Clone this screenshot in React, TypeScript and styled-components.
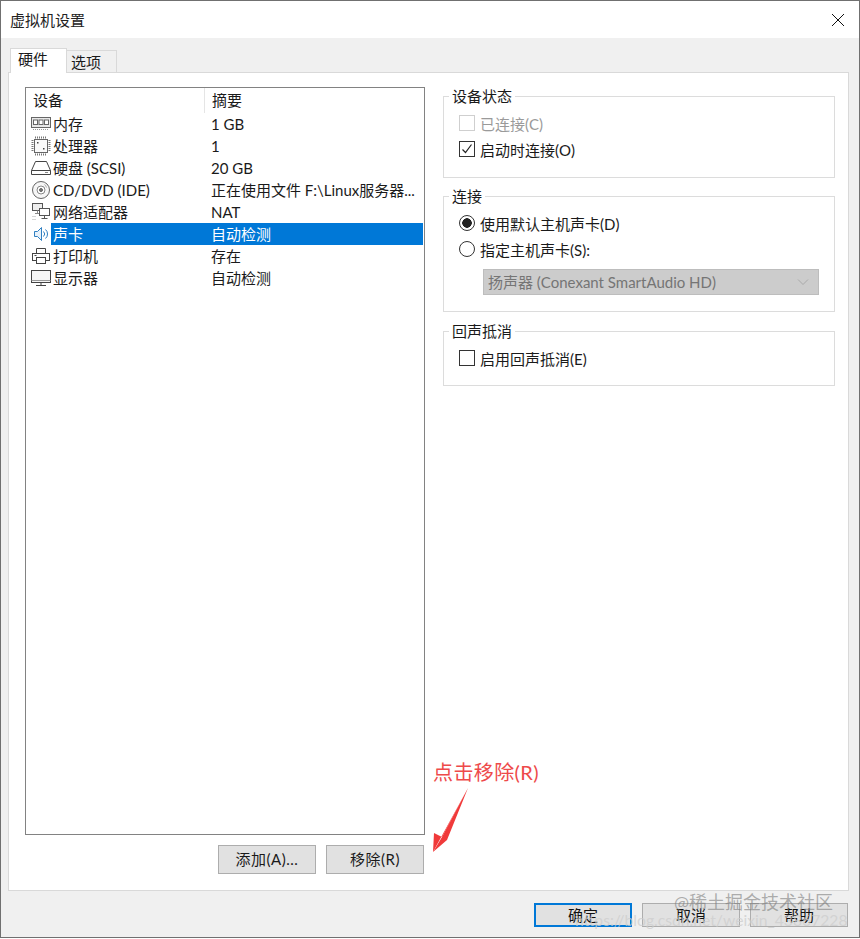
import React from 'react';
import styled, { createGlobalStyle } from 'styled-components';

const Global = createGlobalStyle`
  html, body {
    margin: 0;
    padding: 0;
    background: #fff;
  }
  body {
    font-family: Lato, "Noto Sans CJK SC", sans-serif;
    font-size: 15px;
    color: #1a1a1a;
  }
`;

const MemoryIcon = () => (
  <svg width="20" height="16" viewBox="0 0 20 16" fill="none" stroke="#666">
    <rect x="0.5" y="1.5" width="19" height="10" fill="#e8e8e8" />
    <rect x="2.5" y="4" width="4" height="4.5" fill="#fff" />
    <rect x="8" y="4" width="4" height="4.5" fill="#fff" />
    <rect x="13.5" y="4" width="4" height="4.5" fill="#fff" />
    <path d="M2 13.5h16" stroke="#999" strokeDasharray="1 1" />
  </svg>
);

const CpuIcon = () => (
  <svg width="20" height="20" viewBox="0 0 20 20" fill="none" stroke="#666">
    <rect x="3.5" y="3.5" width="13" height="13" fill="#fafafa" />
    <path d="M4 1.5h12M4 18.5h12M1.5 4v12M18.5 4v12" stroke="#777" strokeWidth="2" strokeDasharray="1 1" />
    <rect x="6" y="6" width="1.5" height="1.5" fill="#444" stroke="none" />
    <rect x="12" y="12" width="1.5" height="1.5" fill="#444" stroke="none" />
  </svg>
);

const DiskIcon = () => (
  <svg width="20" height="18" viewBox="0 0 20 18" fill="none" stroke="#444">
    <path d="M4.5 2.5h11l4 9v4h-19v-4z" />
    <path d="M0.5 11.5h19" />
    <path d="M14 13.5h3" stroke="#888" />
  </svg>
);

const CdIcon = () => (
  <svg width="20" height="20" viewBox="0 0 20 20" fill="none" stroke="#666">
    <circle cx="10" cy="10" r="8.5" fill="#f6f6f6" />
    <circle cx="10" cy="10" r="4" stroke="#888" fill="#fff" />
    <circle cx="10" cy="10" r="1.5" fill="#777" />
    <path d="M13.5 4.5a6.5 6.5 0 0 1 2 3" stroke="#aaa" />
  </svg>
);

const NetworkIcon = () => (
  <svg width="20" height="20" viewBox="0 0 20 20" fill="none" stroke="#555">
    <rect x="1.5" y="1.5" width="10" height="7" fill="#eee" />
    <path d="M6.5 8.5v3M4 11.5h4" stroke="#888" />
    <rect x="8.5" y="6.5" width="10" height="7" fill="#fff" />
    <path d="M13.5 13.5v3M10.5 16.5h6" />
    <path d="M1.5 14.5h4M1.5 17.5h4" stroke="#aaa" strokeDasharray="1 1" />
  </svg>
);

const SpeakerIcon = () => (
  <svg width="20" height="18" viewBox="0 0 20 18" fill="none" stroke="#2f7fc1">
    <path d="M3.5 6.5h3l4-4v13l-4-4h-3z" fill="#e7f1fa" />
    <path d="M12.5 6.5a3.5 3.5 0 0 1 0 5M14.5 4.5a6 6 0 0 1 0 9" />
  </svg>
);

const PrinterIcon = () => (
  <svg width="20" height="18" viewBox="0 0 20 18" fill="none" stroke="#444">
    <path d="M5.5 6.5v-5h9v5" />
    <rect x="1.5" y="6.5" width="17" height="7" />
    <rect x="5.5" y="10.5" width="9" height="6" fill="#fff" />
    <path d="M3.5 8.5h2" />
  </svg>
);

const DisplayIcon = () => (
  <svg width="20" height="18" viewBox="0 0 20 18" fill="none" stroke="#444">
    <rect x="0.5" y="1.5" width="19" height="12" fill="#f6f6f6" />
    <path d="M0.5 11.5h19" stroke="#999" />
    <path d="M5 16.5h10M10 13.5v3" />
  </svg>
);

const devices = [
  { name: '内存', summary: '1 GB', icon: <MemoryIcon /> },
  { name: '处理器', summary: '1', icon: <CpuIcon /> },
  { name: '硬盘 (SCSI)', summary: '20 GB', icon: <DiskIcon /> },
  { name: 'CD/DVD (IDE)', summary: '正在使用文件 F:\\Linux服务器...', icon: <CdIcon /> },
  { name: '网络适配器', summary: 'NAT', icon: <NetworkIcon /> },
  { name: '声卡', summary: '自动检测', icon: <SpeakerIcon />, selected: true },
  { name: '打印机', summary: '存在', icon: <PrinterIcon /> },
  { name: '显示器', summary: '自动检测', icon: <DisplayIcon /> },
];

export default function App() {
  return (
    <>
      <Global />
      <Window>
        <TitleBar>
          <span>虚拟机设置</span>
          <svg width="14" height="14" viewBox="0 0 14 14" stroke="#111" fill="none">
            <path d="M1 1l12 12M13 1L1 13" />
          </svg>
        </TitleBar>
        <TabStrip>
          <Tab $active>硬件</Tab>
          <Tab>选项</Tab>
        </TabStrip>
        <Panel>
          <LeftColumn>
            <DeviceList>
              <ListHeader>
                <HeaderCell>设备</HeaderCell>
                <HeaderCell $second>摘要</HeaderCell>
              </ListHeader>
              {devices.map((d) => (
                <Row key={d.name}>
                  <IconCell>{d.icon}</IconCell>
                  <RowBody $selected={d.selected}>
                    <span>{d.name}</span>
                    <span>{d.summary}</span>
                  </RowBody>
                </Row>
              ))}
            </DeviceList>
            <ListButtons>
              <Button>添加(A)...</Button>
              <Button>移除(R)</Button>
            </ListButtons>
          </LeftColumn>
          <RightColumn>
            <Group>
              <Legend>设备状态</Legend>
              <OptionRow $disabled>
                <CheckBox $disabled />
                已连接(C)
              </OptionRow>
              <OptionRow>
                <CheckBox>
                  <svg width="14" height="14" viewBox="0 0 14 14" fill="none" stroke="#222" strokeWidth="1.2">
                    <path d="M2.5 7.5l3 3 6-8" />
                  </svg>
                </CheckBox>
                启动时连接(O)
              </OptionRow>
            </Group>
            <Group $bottom={16}>
              <Legend>连接</Legend>
              <OptionRow>
                <Radio $checked />
                使用默认主机声卡(D)
              </OptionRow>
              <OptionRow>
                <Radio />
                指定主机声卡(S):
              </OptionRow>
              <SelectBox>
                <span>扬声器 (Conexant SmartAudio HD)</span>
                <svg width="12" height="8" viewBox="0 0 12 8" fill="none" stroke="#aaa">
                  <path d="M1 1.5l5 5 5-5" />
                </svg>
              </SelectBox>
            </Group>
            <Group $bottom={14} $top={1}>
              <Legend>回声抵消</Legend>
              <OptionRow>
                <CheckBox />
                启用回声抵消(E)
              </OptionRow>
            </Group>
          </RightColumn>
        </Panel>
        <Footer>
          <FooterButton $primary>确定</FooterButton>
          <FooterButton $faded>取消</FooterButton>
          <FooterButton $faded>帮助</FooterButton>
        </Footer>
        <Annotation>点击移除(R)</Annotation>
        <ArrowMark width="40" height="70" viewBox="0 0 40 70">
          <path d="M36 1L1 65 2 46 10 50z" fill="#f03a3a" />
          <path d="M36 1L15 53 1 65 10 50z" fill="#f03a3a" />
        </ArrowMark>
        <JuejinMark>@稀土掘金技术社区</JuejinMark>
        <CsdnMark>https://blog.csdn.net/weixin_43867228</CsdnMark>
      </Window>
    </>
  );
}

const Window = styled.div`
  position: relative;
  box-sizing: border-box;
  width: 860px;
  height: 938px;
  display: flex;
  flex-direction: column;
  border: 1px solid #707070;
  background: #f0f0f0;
  overflow: hidden;
`;

const TitleBar = styled.div`
  height: 37px;
  flex: none;
  display: flex;
  align-items: center;
  justify-content: space-between;
  padding: 0 14px 0 9px;
  background: #fff;
  color: #222;
  line-height: 38px;
`;

const TabStrip = styled.div`
  height: 34px;
  flex: none;
  display: flex;
  align-items: flex-end;
  padding-left: 9px;
  position: relative;
  z-index: 1;
`;

const Tab = styled.div<{ $active?: boolean }>`
  box-sizing: border-box;
  border: 1px solid #d9d9d9;
  width: ${(p) => (p.$active ? '57px' : '50px')};
  height: ${(p) => (p.$active ? '25px' : '23px')};
  line-height: ${(p) => (p.$active ? '21px' : '22px')};
  padding-left: ${(p) => (p.$active ? '7px' : '4px')};
  background: ${(p) => (p.$active ? '#fff' : '#f0f0f0')};
  border-bottom: ${(p) => (p.$active ? 'none' : '1px solid #d9d9d9')};
  border-left: ${(p) => (p.$active ? '1px solid #d9d9d9' : 'none')};
  margin-bottom: -1px;
`;

const Panel = styled.div`
  flex: 1;
  min-height: 0;
  margin: 0 10px 0 7px;
  box-sizing: border-box;
  display: grid;
  grid-template-columns: 400px 392px;
  column-gap: 18px;
  padding: 13px 0 16px 16px;
  background: #fff;
  border: 1px solid #d9d9d9;
`;

const LeftColumn = styled.div`
  display: flex;
  flex-direction: column;
  padding-top: 1px;
  min-height: 0;
`;

const DeviceList = styled.div`
  flex: 1;
  border: 1px solid #828282;
  background: #fff;
`;

const ListHeader = styled.div`
  display: grid;
  grid-template-columns: 178px 1fr;
  height: 25px;
  line-height: 25px;
`;

const HeaderCell = styled.div<{ $second?: boolean }>`
  padding-left: 7px;
  border-left: ${(p) => (p.$second ? '1px solid #e5e5e5' : 'none')};
`;

const Row = styled.div`
  display: flex;
  height: 22px;
  line-height: 22px;
  margin-right: 1px;
`;

const IconCell = styled.div`
  width: 25px;
  flex: none;
  box-sizing: border-box;
  padding-left: 5px;
  display: flex;
  align-items: center;
`;

const RowBody = styled.div<{ $selected?: boolean }>`
  flex: 1;
  display: grid;
  grid-template-columns: 158px 1fr;
  padding-left: 2px;
  white-space: nowrap;
  background: ${(p) => (p.$selected ? '#0078d7' : 'transparent')};
  color: ${(p) => (p.$selected ? '#fff' : 'inherit')};
`;

const ListButtons = styled.div`
  flex: none;
  display: flex;
  justify-content: flex-end;
  gap: 10px;
  margin: 10px 1px 0 0;
`;

const Button = styled.div`
  box-sizing: border-box;
  width: 98px;
  height: 29px;
  line-height: 27px;
  letter-spacing: 0.5px;
  text-align: center;
  background: #e1e1e1;
  border: 1px solid #adadad;
`;

const RightColumn = styled.div`
  display: flex;
  flex-direction: column;
  gap: 8px;
`;

const Group = styled.fieldset<{ $bottom?: number; $top?: number }>`
  margin: ${(p) => p.$top ?? 0}px 0 0;
  padding: 4px 15px ${(p) => p.$bottom ?? 15}px 15px;
  min-width: 0;
  border: 1px solid #dcdcdc;
`;

const Legend = styled.legend`
  margin-left: -10px;
  padding: 0 3px;
  line-height: 20px;
  height: 20px;
`;

const OptionRow = styled.div<{ $disabled?: boolean }>`
  height: 26px;
  display: flex;
  align-items: center;
  gap: 5px;
  color: ${(p) => (p.$disabled ? '#9a9a9a' : 'inherit')};
`;

const CheckBox = styled.span<{ $disabled?: boolean }>`
  box-sizing: border-box;
  width: 16px;
  height: 16px;
  flex: none;
  display: flex;
  align-items: center;
  justify-content: center;
  background: #fff;
  border: 1px solid ${(p) => (p.$disabled ? '#cfcfcf' : '#333')};
`;

const Radio = styled.span<{ $checked?: boolean }>`
  box-sizing: border-box;
  width: 16px;
  height: 16px;
  flex: none;
  border-radius: 50%;
  border: 1px solid #333;
  background: ${(p) =>
    p.$checked ? 'radial-gradient(circle, #222 0 4.5px, #fff 5px)' : '#fff'};
`;

const SelectBox = styled.div`
  box-sizing: border-box;
  height: 26px;
  margin: 7px 0 0 24px;
  padding: 0 9px 1px 4px;
  display: flex;
  align-items: center;
  justify-content: space-between;
  background: #cccccc;
  border: 1px solid #bdbdbd;
  color: #757575;
`;

const Footer = styled.div`
  height: 46px;
  flex: none;
  box-sizing: border-box;
  display: flex;
  justify-content: flex-end;
  gap: 10px;
  padding: 12px 11px 0 0;
`;

const FooterButton = styled.div<{ $primary?: boolean; $faded?: boolean }>`
  box-sizing: border-box;
  width: 98px;
  height: 24px;
  line-height: ${(p) => (p.$primary ? '20px' : '22px')};
  text-align: center;
  background: #e1e1e1;
  color: #111;
  border: ${(p) => (p.$primary ? '2px solid #0078d7' : '1px solid #adadad')};
`;

const Annotation = styled.div`
  position: absolute;
  left: 432px;
  top: 757px;
  font-size: 20px;
  letter-spacing: 0.4px;
  line-height: 28px;
  color: #ee4a4a;
  white-space: nowrap;
`;

const ArrowMark = styled.svg`
  position: absolute;
  left: 431px;
  top: 786px;
`;

const JuejinMark = styled.div`
  position: absolute;
  left: 673px;
  top: 888px;
  font-size: 18px;
  line-height: 26px;
  color: rgba(125, 125, 125, 0.6);
  white-space: nowrap;
`;

const CsdnMark = styled.div`
  position: absolute;
  left: 574px;
  top: 907px;
  font-size: 15.7px;
  line-height: 24px;
  color: rgba(205, 205, 205, 0.75);
  white-space: nowrap;
`;
